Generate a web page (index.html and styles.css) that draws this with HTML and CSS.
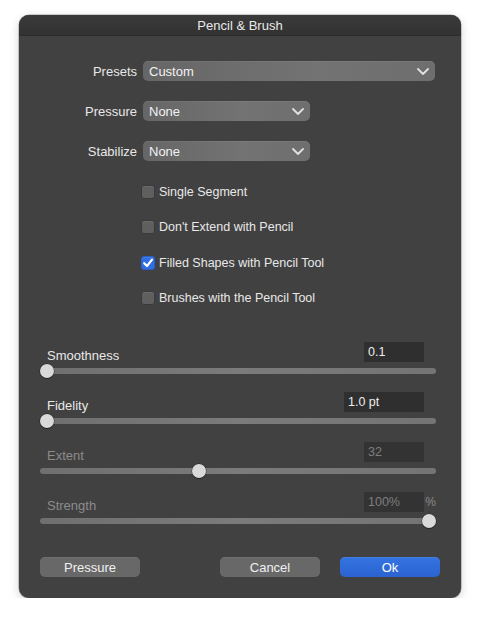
FILE: index.html
```html
<!DOCTYPE html>
<html>
<head>
<meta charset="utf-8">
<link rel="stylesheet" href="styles.css">
</head>
<body>
<div class="window">
  <div class="titlebar">Pencil &amp; Brush</div>
  <div class="content">
    <div class="form">
      <label class="lbl">Presets</label>
      <div class="select wide"><span>Custom</span><svg class="chev" viewBox="0 0 12 7" width="12" height="7"><path d="M1 1 L6 6 L11 1" fill="none" stroke="#e0e0e0" stroke-width="1.8" stroke-linecap="round" stroke-linejoin="round"/></svg></div>
      <label class="lbl">Pressure</label>
      <div class="select narrow"><span>None</span><svg class="chev" viewBox="0 0 12 7" width="12" height="7"><path d="M1 1 L6 6 L11 1" fill="none" stroke="#e0e0e0" stroke-width="1.8" stroke-linecap="round" stroke-linejoin="round"/></svg></div>
      <label class="lbl">Stabilize</label>
      <div class="select narrow"><span>None</span><svg class="chev" viewBox="0 0 12 7" width="12" height="7"><path d="M1 1 L6 6 L11 1" fill="none" stroke="#e0e0e0" stroke-width="1.8" stroke-linecap="round" stroke-linejoin="round"/></svg></div>
    </div>

    <div class="checks">
      <div class="check"><span class="box"></span><span>Single Segment</span></div>
      <div class="check"><span class="box"></span><span>Don't Extend with Pencil</span></div>
      <div class="check"><span class="box on"><svg viewBox="0 0 14 14" width="14" height="14"><path d="M3.2 7.2 L6 10 L11 3.6" fill="none" stroke="#fff" stroke-width="2.2" stroke-linecap="round" stroke-linejoin="round"/></svg></span><span>Filled Shapes with Pencil Tool</span></div>
      <div class="check"><span class="box"></span><span>Brushes with the Pencil Tool</span></div>
    </div>

    <div class="sliders">
      <div class="slider">
        <div class="shead"><span class="slabel">Smoothness</span><span class="field w60">0.1</span><span class="unit"></span></div>
        <div class="track"><span class="thumb" style="left:0%"></span></div>
      </div>
      <div class="slider">
        <div class="shead"><span class="slabel">Fidelity</span><span class="field w80">1.0 pt</span><span class="unit"></span></div>
        <div class="track"><span class="thumb" style="left:0%"></span></div>
      </div>
      <div class="slider disabled">
        <div class="shead"><span class="slabel">Extent</span><span class="field w60">32</span><span class="unit"></span></div>
        <div class="track"><span class="thumb" style="left:40%"></span></div>
      </div>
      <div class="slider disabled">
        <div class="shead"><span class="slabel">Strength</span><span class="field w60">100%</span><span class="unit">%</span></div>
        <div class="track"><span class="thumb" style="left:100%"></span></div>
      </div>
    </div>

    <div class="buttons">
      <button class="btn">Pressure</button>
      <button class="btn push">Cancel</button>
      <button class="btn primary">Ok</button>
    </div>
  </div>
</div>
</body>
</html>
```

FILE: styles.css
```css
* { box-sizing: border-box; }
html, body { margin: 0; padding: 0; background: #ffffff; }
body {
  font-family: "Liberation Sans", Arial, sans-serif;
  font-size: 13px;
  color: #e6e6e6;
  padding: 15px 0 0 19px;
}
.window {
  width: 442px;
  height: 583px;
  background: #414141;
  border-radius: 10px;
  display: flex;
  flex-direction: column;
  overflow: hidden;
  box-shadow: 0 3px 10px rgba(0,0,0,0.18), 0 0 0 0.5px rgba(0,0,0,0.35);
}
.titlebar {
  height: 21px;
  flex: none;
  background: linear-gradient(#3a3a3a, #323232);
  border-bottom: 1px solid #2c2c2c;
  text-align: center;
  line-height: 21px;
  font-size: 13px;
  color: #e8e8e8;
}
.content {
  flex: 1;
  display: flex;
  flex-direction: column;
  padding-top: 25px;
}
.form {
  display: grid;
  grid-template-columns: 118px auto;
  column-gap: 6px;
  row-gap: 20px;
  align-items: center;
}
.lbl { text-align: right; color: #e8e8e8; }
.select {
  height: 20px;
  border-radius: 5px;
  background: linear-gradient(90deg, #666666, #737373 60%, #6e6e6e);
  display: flex;
  align-items: center;
  justify-content: space-between;
  padding: 0 6px 0 6px;
  color: #f2f2f2;
  box-shadow: inset 0 0.5px 0 rgba(255,255,255,0.12);
}
.select.wide { width: 292px; }
.select.narrow { width: 167px; }
.chev { margin-top: 1px; }
.checks {
  margin-top: 24px;
  margin-left: 122px;
  display: flex;
  flex-direction: column;
  gap: 21.3px;
}
.check {
  display: flex;
  align-items: center;
  height: 14px;
  gap: 4px;
  color: #e8e8e8;
  font-size: 12.5px;
}
.box {
  width: 14px;
  height: 14px;
  border-radius: 3px;
  background: #5f5f5f;
  border: 1px solid #3a3a3a;
  box-shadow: inset 0 1px 0 rgba(255,255,255,0.08);
  display: flex;
}
.box.on {
  background: #2f6fe3;
  border-color: #2a60c4;
}
.box.on svg { margin: -1px; }
.sliders {
  margin-top: 37px;
  padding: 0 25px 0 21px;
  display: flex;
  flex-direction: column;
  gap: 14px;
}
.slider { display: flex; flex-direction: column; gap: 2px; }
.shead {
  display: flex;
  align-items: flex-end;
  height: 20px;
}
.slabel {
  flex: 1;
  margin-left: 7px;
  margin-bottom: -1px;
  color: #e8e8e8;
}
.field {
  height: 20px;
  background: #2f2f2f;
  padding: 0 4px;
  line-height: 20px;
  font-size: 12.5px;
  color: #ececec;
}
.w60 { width: 60px; }
.w80 { width: 80px; }
.unit {
  width: 12px;
  text-align: right;
  align-self: center;
  font-size: 12px;
  color: #8a8a8a;
}
.track {
  position: relative;
  height: 14px;
}
.track::before {
  content: "";
  position: absolute;
  left: 0; right: 0;
  top: 4px;
  height: 6px;
  border-radius: 3px;
  background: linear-gradient(90deg, #6f6f6f, #7b7b7b 50%, #747474);
}
.thumb {
  position: absolute;
  top: 0;
  width: 14px;
  height: 14px;
  border-radius: 50%;
  background: #d9d9d9;
  box-shadow: 0 0 0 0.5px rgba(0,0,0,0.45), 0 1px 1px rgba(0,0,0,0.3);
}
.slider:nth-child(3) .thumb { margin-left: -6px; }
.slider:nth-child(4) .thumb { margin-left: -14px; }
.disabled .slabel { color: #8c8c8c; }
.disabled .field { color: #7e7e7e; background: #333333; }
.buttons {
  margin-top: auto;
  margin-bottom: 21px;
  padding: 0 21px;
  display: flex;
  gap: 20px;
}
.btn {
  flex: none;
  width: 100px;
  height: 20px;
  border: none;
  border-radius: 5px;
  background: #686868;
  color: #f0f0f0;
  font-family: "Liberation Sans", Arial, sans-serif;
  font-size: 13px;
  padding: 0;
  box-shadow: inset 0 0.5px 0 rgba(255,255,255,0.12);
}
.btn.push { margin-left: auto; }
.btn.primary {
  background: linear-gradient(#3474e0, #2b63d1);
  color: #ffffff;
}
```
